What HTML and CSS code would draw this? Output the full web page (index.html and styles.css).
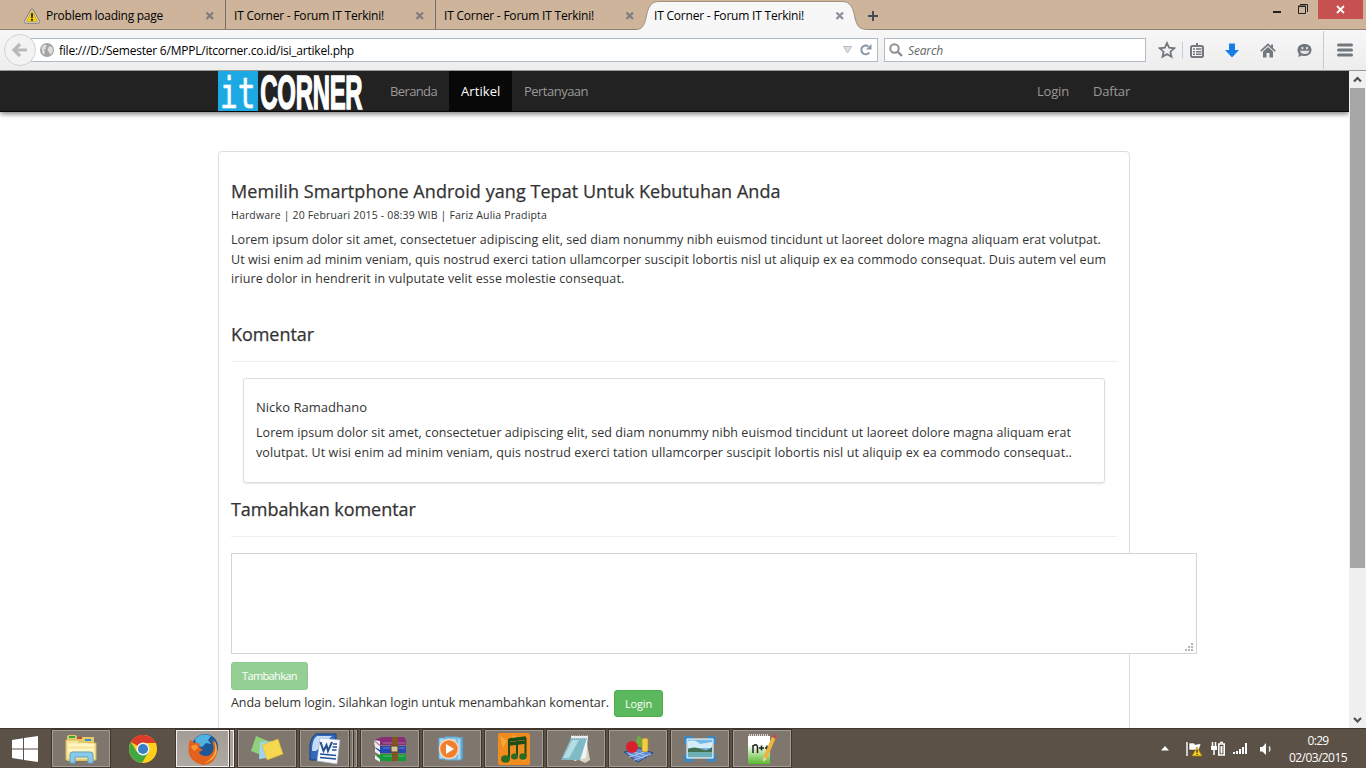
FILE: index.html
```html
<!DOCTYPE html>
<html lang="id">
<head>
<meta charset="utf-8">
<title>IT Corner - Forum IT Terkini!</title>
<link rel="stylesheet" href="styles.css">
</head>
<body>
<div class="screen">
<header class="tabs">
  <div class="tab first">
    <svg class="warn" width="18" height="16" viewBox="0 0 18 16"><path d="M8 1.500Q9 .3 10 1.500l6.600 11.800q.5 1.700-1.200 1.900H2.600Q.9 15 1.400 13.300z" fill="#e8e8e0" stroke="#777" stroke-width="1"/><path d="M9 2.700l5.800 10.800H3.200z" fill="#f3cd12" stroke="#c79b0a" stroke-width=".7"/><path d="M8 5.500h2l-.4 4.700H8.400zM8.100 11.100h1.800v1.700H8.100z" fill="#111"/></svg>
    <span class="t1">Problem loading page</span>
    <svg class="x" width="10" height="10" viewBox="0 0 10 10"><path d="M1.500 1.500l6.500 6.500M8 1.500L1.500 8"/></svg>
  </div>
  <div class="tab"><span class="t2">IT Corner - Forum IT Terkini!</span><svg class="x" width="10" height="10" viewBox="0 0 10 10"><path d="M1.500 1.500l6.500 6.500M8 1.500L1.500 8"/></svg></div>
  <div class="tab last"><span class="t2">IT Corner - Forum IT Terkini!</span><svg class="x" width="10" height="10" viewBox="0 0 10 10"><path d="M1.500 1.500l6.500 6.500M8 1.500L1.500 8"/></svg></div>
  <div class="tab active">
    <svg class="shape" width="236" height="30" viewBox="0 0 236 30"><path d="M0 30V29.500C6 29.500 8 26 10 18C12 8 14 1.500 23 1.500H206C215 1.500 217 8 219 18C221 26 223 29.500 232 29.500V30z" fill="#f7f7f7"/><path d="M0 29.500C6 29.500 8 26 10 18C12 8 14 1.500 23 1.500H206C215 1.500 217 8 219 18C221 26 223 29.500 232 29.500" fill="none" stroke="#a3917e"/></svg>
    <span class="t2">IT Corner - Forum IT Terkini!</span><svg class="x" width="10" height="10" viewBox="0 0 10 10"><path d="M1.500 1.500l6.500 6.500M8 1.500L1.500 8"/></svg>
  </div>
  <svg class="plus" width="12" height="12" viewBox="0 0 12 12"><path d="M6 1v10M1 6h10" stroke="#444d58" stroke-width="2"/></svg>
  <div class="winbtns">
    <svg width="10" height="16" viewBox="0 0 10 16"><path d="M1 11h8v2H1z" fill="#222"/></svg>
    <svg width="12" height="16" viewBox="0 0 12 16"><path d="M1.500 6.500h7v7h-7zM1 6h8M3 4.500h7.500V12" fill="none" stroke="#222"/></svg>
    <div class="close"><svg width="9" height="9" viewBox="0 0 9 9"><path d="M1 1l7 7M8 1L1 8" stroke="#fff" stroke-width="1.800"/></svg></div>
  </div>
</header>

<div class="toolbar">
  <svg class="back" width="32" height="34" viewBox="0 0 32 34"><circle cx="16" cy="17" r="15.500" fill="#f3f3f3" stroke="#d0d3d6"/><path d="M23 17H11.500M16 11l-6 6 6 6" fill="none" stroke="#b7b9bb" stroke-width="3.200"/></svg>
  <div class="url">
    <svg width="14" height="14" viewBox="0 0 14 14"><circle cx="7" cy="7" r="7" fill="#a3a3a3"/><path d="M1.500 5L3 2.500 6 1.500l1 1.500-1.500 1.500L6 6 4 6.500 5 9 4 12 2.500 10zM8 5l1.500-2L12 4l1 3-1 3.500-2 1L9 9 7.500 7.500z" fill="#ddd"/></svg>
    <span class="addr">file:///D:/Semester 6/MPPL/itcorner.co.id/isi_artikel.php</span>
    <svg class="drop" width="9" height="8" viewBox="0 0 9 8"><path d="M.5.5h8L4.500 7z" fill="#dde0e6" stroke="#b4b9c4"/></svg>
    <svg width="12" height="12" viewBox="0 0 12 12"><path d="M9.300 8.500A4.400 4.400 0 1 1 8.500 2.500" fill="none" stroke="#8996a8" stroke-width="2"/><path d="M11.500 0v5.500H6z" fill="#8996a8"/></svg>
  </div>
  <div class="search">
    <svg width="14" height="14" viewBox="0 0 14 14"><circle cx="5.500" cy="5.500" r="4.200" fill="none" stroke="#8f8f8f" stroke-width="2"/><path d="M8.800 8.800l4.200 4.200" stroke="#8f8f8f" stroke-width="2.400"/></svg>
    <span class="sr">Search</span>
  </div>
  <div class="tools">
    <svg width="18" height="18" viewBox="0 0 18 18"><path d="M9 2l2.100 4.700 5.100.6-3.800 3.400 1.100 5L9 13.100l-4.500 2.600 1.100-5L1.800 7.300l5.100-.6z" fill="none" stroke="#73787f" stroke-width="1.800"/></svg>
    <i class="sep1"></i>
    <svg width="14" height="15" viewBox="0 0 14 15"><path d="M4 2h2V0h2v2h2v2H4z" fill="#73787f"/><rect x="1" y="3" width="12" height="11" rx="1.500" fill="#f2f2f2" stroke="#73787f" stroke-width="2"/><path d="M3 6h2M6 6h5.500M3 8.700h2M6 8.700h5.500M3 11.300h2M6 11.300h5.500" stroke="#73787f" stroke-width="1.500"/></svg>
    <svg class="dl" width="14" height="15" viewBox="0 0 14 15"><path d="M4 .5h6v6.500h4L7 14.500 0 7h4z" fill="#177ee5"/></svg>
    <svg class="hm" width="16" height="15" viewBox="0 0 16 15"><path d="M.8 8.200L8 1.500l7.200 6.700" fill="none" stroke="#73787f" stroke-width="1.700"/><path d="M3 8.500l5-4.500 5 4.500V14.500H9.500V10h-3v4.500H3zM11 1.500h2v4l-2-2z" fill="#73787f"/></svg>
    <svg class="sm" width="15" height="15" viewBox="0 0 15 15"><path d="M7.500 1c4.500 0 7 2.600 7 6s-2.800 6-7 6q-1.800 0-3-.5Q3 14 1 13.500q1-1 .8-2.500Q.5 9.500.5 7c0-3.400 2.500-6 7-6z" fill="#73787f"/><path d="M4.500 4h1.800v2.200H4.500zM9 4h1.800v2.200H9zM3 7.800h9.500Q11.500 11 7.700 11T3 7.800z" fill="#e4e4e4"/></svg>
    <i class="sep2"></i>
    <svg class="menu" width="16" height="14" viewBox="0 0 16 14"><path d="M1.500 2h13M1.500 7h13M1.500 12h13" stroke="#73787f" stroke-width="3" stroke-linecap="round"/></svg>
  </div>
</div>

<div class="viewport">
  <div class="page">
    <nav class="navbar">
      <svg class="logo" width="148" height="40" viewBox="0 0 148 40"><rect width="40" height="40" fill="#1ca8e3"/><text transform="translate(2 36.500) scale(.7 1)" class="logo-it">it</text><text transform="translate(42.300 37.500) scale(.498 1)" class="logo-corner">CORNER</text></svg>
      <a class="nl"><span class="n1">Beranda</span></a>
      <a class="nl on"><span class="n2">Artikel</span></a>
      <a class="nl"><span class="n3">Pertanyaan</span></a>
      <a class="nl right"><span class="n4">Login</span></a>
      <a class="nl"><span class="n5">Daftar</span></a>
    </nav>
    <main class="article">
      <h3 class="title"><span class="h1">Memilih Smartphone Android yang Tepat Untuk Kebutuhan Anda</span></h3>
      <div class="meta"><span class="m1">Hardware | 20 Februari 2015 - 08:39 WIB | Fariz Aulia Pradipta</span></div>
      <p class="body"><span class="b1">Lorem ipsum dolor sit amet, consectetuer adipiscing elit, sed diam nonummy nibh euismod tincidunt ut laoreet dolore magna aliquam erat volutpat.</span><br><span class="b2">Ut wisi enim ad minim veniam, quis nostrud exerci tation ullamcorper suscipit lobortis nisl ut aliquip ex ea commodo consequat. Duis autem vel eum</span><br><span class="b3">iriure dolor in hendrerit in vulputate velit esse molestie consequat.</span></p>
      <h3 class="section"><span class="h2">Komentar</span></h3>
      <section class="comment">
        <h5>Nicko Ramadhano</h5>
        <p><span class="b4">Lorem ipsum dolor sit amet, consectetuer adipiscing elit, sed diam nonummy nibh euismod tincidunt ut laoreet dolore magna aliquam erat</span><br><span class="b5">volutpat. Ut wisi enim ad minim veniam, quis nostrud exerci tation ullamcorper suscipit lobortis nisl ut aliquip ex ea commodo consequat..</span></p>
      </section>
      <h3 class="section second"><span class="h3">Tambahkan komentar</span></h3>
      <div class="field"><svg width="9" height="9" viewBox="0 0 9 9"><path d="M6 0h2v2H6zM6 3h2v2H6zM3 3h2v2H3zM6 6h2v2H6zM3 6h2v2H3zM0 6h2v2H0z" fill="#b5b5b5"/></svg></div>
      <button class="btn disabled"><span class="k1">Tambahkan</span></button>
      <div class="login-row"><span class="b6">Anda belum login. Silahkan login untuk menambahkan komentar.</span><button class="btn"><span class="k2">Login</span></button></div>
    </main>
  </div>
  <div class="scroll">
    <svg width="17" height="17" viewBox="0 0 17 17"><path d="M5 10.500L8.500 7l3.500 3.500" fill="none" stroke="#505050" stroke-width="2.200"/></svg>
    <div class="thumb"></div>
    <svg class="down" width="17" height="17" viewBox="0 0 17 17"><path d="M5 7l3.500 3.500L12 7" fill="none" stroke="#505050" stroke-width="2.200"/></svg>
  </div>
</div>

<footer class="taskbar">
  <div class="start"><svg width="28" height="26" viewBox="0 0 28 26"><path d="M1 4l11-1.700V12.500H1zM13 2.100L27 0v12.500H13zM1 13.500h11v10.200L1 22zM13 13.500h14V26l-14-2.100z" fill="#fff"/></svg></div>
  <div class="app"><svg width="34" height="32" viewBox="0 0 34 32"><path d="M3 4l1-2h8l1 2h17v24H3z" fill="#e7c967"/><path d="M5 3h6v2H5z" fill="#2cae3c"/><path d="M13 4h5v2h-5z" fill="#c9452d"/><path d="M21 6h6v2h-6z" fill="#368cd0"/><path d="M2 7h12l1 2h8l1 1h8v17H2z" fill="#f7e59c" stroke="#d8b856"/><path d="M4 12h26M4 17h26" stroke="#fff4c4" stroke-width="3"/><path d="M6 30V22q0-3 3-3h17q3 0 3 3v8h-5v-6H11v6z" fill="#8bcbe9" stroke="#5ba4ca"/></svg></div>
  <div class="app plain"><svg width="30" height="30" viewBox="0 0 30 30"><circle cx="15" cy="15" r="14" fill="#ffcf1c"/><path d="M15 15L2.900 8A14 14 0 0 1 27.800 9H15z" fill="#dd3c2d"/><path d="M2.900 8A14 14 0 0 0 14 29l6.500-11H15L9 18z" fill="#43a744"/><circle cx="15" cy="15" r="6.500" fill="#f5f5f5"/><circle cx="15" cy="15" r="5" fill="#397fc9"/></svg></div>
  <div class="app lit one"><svg width="32" height="32" viewBox="0 0 32 32"><circle cx="18" cy="14" r="13" fill="#1c5797"/><path d="M8 6Q15-1 24 3l-3 4 3 4-5-1-4 4-6-2z" fill="#4fb3e2"/><path d="M3 7q2 0 4 3 3-1 6 1l-1 3 4 3-4 2q1 4 7 4 5 0 7-5 2-6-2-11 7 5 6 12-2 13-14 13Q3 29 1.500 19 1.300 12 3 7z" fill="#e3611d"/><path d="M26 6q6 7 3 15-4 8-12 9 9-4 11-12 1-6-2-12z" fill="#f7b132"/><path d="M4 14q2-3 6-2l1 3-4 3z" fill="#f59635"/></svg></div><i class="sheet bright"></i>
  <div class="app gap3"><svg width="34" height="30" viewBox="0 0 34 30"><path d="M6 2l12 5-4 15-13-5z" fill="#8fd07a"/><path d="M10 8l13-1 2 16-16 2z" fill="#9ed5f4"/><path d="M12 11l16-6 5 15-16 6z" fill="#f5d850" stroke="#d7b739" stroke-width=".6"/></svg></div>
  <div class="app word"><svg width="34" height="32" viewBox="0 0 34 32"><path d="M8 1h20v26H2V13Q3 4 8 1z" fill="#3469b8" stroke="#173d80"/><path d="M9 3h15L8 18H4q0-12 5-15z" fill="#c3dbf6"/><path d="M12 5l20 2-3 24-20-3z" fill="#f6f9ff" stroke="#a3adbd" stroke-width=".6"/><path d="M12.500 9l3 9 3-6 1.500 6 4-9" fill="none" stroke="#24508f" stroke-width="2"/><path d="M25 11h4M24.500 14h4.500M24 17h4.500M12 21l16 1.500M12 24.500l16 1.500" stroke="#24508f" stroke-width="1.600"/></svg></div><i class="sheet"></i><i class="sheet"></i>
  <div class="app gap4"><svg width="34" height="28" viewBox="0 0 34 28"><path d="M1 5l8-3h22l2 3v5H6z" fill="#8b2c78"/><path d="M1 5l6 5v-4z" fill="#f3e9e3"/><path d="M6 11h27v7H7L2 14z" fill="#2548b4"/><path d="M7 19h26v7H7L2 22z" fill="#169939"/><path d="M10 8h22M10 13h22M10 21h22" stroke="#fff" stroke-opacity=".3"/><path d="M1 6l6 5v4l-5-3zM2 13l5 4v3l-5-3zM2 20l5 4v3l-5-3z" fill="#eee"/><path d="M19 2h6v24h-6z" fill="#815424"/><path d="M18 11h7v6h-7z" fill="#d9c49b" stroke="#584020"/></svg></div>
  <div class="app"><svg width="30" height="26" viewBox="0 0 30 26"><path d="M12 1h14v22H12z" fill="#54a3d2"/><path d="M8 1h12l4 2v21H8zM2 2h18v21H2z" fill="#a7d8f1" stroke="#5fa9d4"/><circle cx="12" cy="13" r="9.500" fill="#f08030" stroke="#f7d5b8" stroke-width="1.500"/><path d="M9 8l8 5-8 5z" fill="#fff"/></svg></div>
  <div class="app"><svg width="32" height="32" viewBox="0 0 32 32"><rect width="32" height="32" rx="2" fill="#f08b1d"/><path d="M2 3l7 5-4 7zM20 22l9-3-2 10zM14 2l5 2-4 4z" fill="#f6a83a"/><path d="M11 7l17-2M11 11l17-2" fill="none" stroke="#1d4d1b" stroke-width="3.500"/><path d="M11 6v19M19 8v15M27.500 5v18" stroke="#1d4d1b" stroke-width="2"/><ellipse cx="7.500" cy="26" rx="4.500" ry="3.700" fill="#2c6a22"/><ellipse cx="25" cy="23.500" rx="3.700" ry="3.200" fill="#2c6a22"/><ellipse cx="16.500" cy="23.500" rx="3.500" ry="3" fill="#2c6a22"/></svg></div>
  <div class="app"><svg width="32" height="30" viewBox="0 0 32 30"><path d="M26 4l4 22-5 3-6-3z" fill="#d9d3bf"/><path d="M11 2h17l-2 22-12 3z" fill="#f0f4f4"/><path d="M11 4h16l-7 22H1z" fill="#7fbac6"/><path d="M12 6h7L9 24H3z" fill="#b5dce3"/><path d="M11 3h17" stroke="#e8e8e8" stroke-width="3" stroke-dasharray="1 1"/></svg></div>
  <div class="app"><svg width="32" height="30" viewBox="0 0 32 30"><path d="M2 18l15-4 14 5-15 9z" fill="#628bd2" stroke="#26498b"/><path d="M6 20l16 4M11 18l15 4M7 23l18-6M12 26l17-6" stroke="#a9c8ef"/><path d="M14 13q-1-7 3-12 5 6 3 12z" fill="#6dad44"/><circle cx="10" cy="13" r="6" fill="#d7222d"/><path d="M20 5q3-2 6 0v12q-3 2-6 0z" fill="#f1cc48" stroke="#b78d20" stroke-width=".7"/></svg></div>
  <div class="app"><svg width="32" height="26" viewBox="0 0 32 26"><path d="M2 8V2h7M23 2h7v6M30 18v6h-7M9 24H2v-6" fill="none" stroke="#348bca" stroke-width="3.500"/><path d="M3 3h26v19H3z" fill="#75b8e6" stroke="#fff"/><path d="M4 5q8-2 12 3l12-2v6H4z" fill="#d5edf8"/><path d="M4 13q6-3 13 0t11-2v5H4z" fill="#436f52"/><path d="M4 16h24v5H4z" fill="#6eafb3"/></svg></div>
  <div class="app"><svg width="32" height="32" viewBox="0 0 32 32"><defs><linearGradient id="np" x2="0" y2="1"><stop offset=".3" stop-color="#fff"/><stop offset="1" stop-color="#58b82b"/></linearGradient></defs><path d="M2 3h22v28H2z" fill="url(#np)"/><path d="M3 2h20" stroke="#ddd" stroke-width="2" stroke-dasharray="1 1"/><path d="M7 20V12M7 13q4-3 4.500 1v6M13 15h5M15.500 12.500v5M19 15h4M21 12.500v5" fill="none" stroke="#222" stroke-width="1.500"/><path d="M28 4L19 25" stroke="#f0b33c" stroke-width="4"/><path d="M27 1l4 2-1 3-4-2z" fill="#bd4f51"/><path d="M17 24l4 2-4 3z" fill="#e9cfab"/></svg></div>
  <div class="tray">
    <svg width="8" height="5" viewBox="0 0 8 5"><path d="M0 4.500L4 0l4 4.500z" fill="#fff"/></svg>
    <svg class="flag" width="17" height="16" viewBox="0 0 17 16"><path d="M1 1v14" stroke="#fff" stroke-width="1.400"/><path d="M3 2h5l1 1.500 6-1L13 9H3z" fill="#fff" stroke="#333" stroke-width=".5"/><path d="M11 6l5 9H6z" fill="#f4cf20" stroke="#a87b00" stroke-width=".6"/><path d="M11 8.800v3M11 13v1" stroke="#222" stroke-width="1.200"/></svg>
    <svg class="bat" width="16" height="16" viewBox="0 0 16 16"><path d="M2.500 1v4M5.500 1v4M4 9v5" fill="none" stroke="#fff" stroke-width="1.500"/><path d="M1 5h6v4H1z" fill="#fff"/><path d="M8.800 3h5.400v11H8.800z" fill="#4a4138" stroke="#fff" stroke-width="1.600"/><path d="M10.500 5h2v7.500h-2z" fill="#fff"/><path d="M10 1.500h3" stroke="#fff" stroke-width="1.500"/></svg>
    <svg class="sig" width="16" height="13" viewBox="0 0 16 13"><path d="M0 10h2v2H0zM3 9h2v3H3zM6 7h2v5H6zM9 5h2v7H9zM12 1h2v11h-2z" fill="#fff"/></svg>
    <svg class="spk" width="14" height="14" viewBox="0 0 14 14"><path d="M1 5h2.500L7 1v12L3.500 9.500H1z" fill="#fff"/><path d="M10 4.500q2 2.500 0 5" fill="none" stroke="#e8e5e2" stroke-width="1.300"/></svg>
    <div class="clock"><div class="q1">0:29</div><div class="q2">02/03/2015</div></div>
  </div>
</footer>
</div>
</body>
</html>
```
FILE: styles.css
```css
*{box-sizing:border-box}
body{margin:0;overflow:hidden;background:#fff;font:12px "Open Sans","Noto Sans",sans-serif;color:#333}
h3,h5,p{margin:0;font-weight:400}
svg{display:block;flex:none}
span{white-space:nowrap}
.screen{width:1366px;height:768px;display:flex;flex-direction:column;overflow:hidden}

/* browser chrome */
.tabs{height:30px;background:#cdb49b;border-bottom:1px solid #8d8175;display:flex;flex:none;color:#000;padding-left:16px;position:relative;z-index:1}
.tab{width:210px;height:29px;padding:2px 10px 0 8px;display:flex;align-items:center;border-right:1px solid #766d66;flex:none}
.tab.first{padding-left:7px}
.tab.last{border-right:0;padding-right:11px}
.tab.active{height:30px;border:0;position:relative;width:210px;padding:1px 11px 0 8px}
.warn{margin-right:5px}
.tab span{position:relative}
.t1{letter-spacing:-.262px}
.t2{letter-spacing:-.206px}
.x{margin-left:auto;position:relative}
.x path{stroke:#7e7e80;stroke-width:2.300;fill:none}
.tab.active .x path{stroke:#8b929b}
.shape{position:absolute;left:-10px;top:0}
.plus{margin:10px 0 0 11px}
.winbtns{display:flex;margin-left:auto;gap:15px;padding-right:3px}
.close{width:45px;height:19px;background:#c75050;display:flex;align-items:center;justify-content:center;margin-left:-6px}
.toolbar{height:41px;flex:none;background:linear-gradient(#f7f7f7,#ededed);border-bottom:1px solid #979b95;display:flex;align-items:flex-start;padding-left:4px}
.back{margin-top:3px;position:relative;z-index:1}
.url{margin:8px 0 0 -5px;width:847px;height:24px;border:1px solid #b1bbc6;background:#fff;display:flex;align-items:center;padding:0 5px 0 8px;color:#000}
.addr{margin-left:5px;letter-spacing:-.227px}
.drop{margin:0 8px 0 auto}
.search{margin:8px 0 0 6px;width:262px;height:24px;border:1px solid #b1bbc6;background:#fff;display:flex;align-items:center;padding-left:4px;font-style:italic;color:#666}
.sr{margin-left:5px;letter-spacing:-.151px}
.tools{display:flex;align-items:center;height:40px;margin-left:12px}
.sep1{width:1px;height:16px;background:#c5ccd3;margin:0 7px 0 6px}
.dl,.hm,.sm{margin-left:21px}
.sep2{width:1px;height:38px;background:#c8cbd0;margin:0 13px 0 11px}

/* page */
.viewport{flex:1;display:flex;min-height:0}
.page{width:1349px;overflow:hidden;background:#fff}
.navbar{height:41px;background:#222;border-bottom:1px solid #080808;box-shadow:0 2px 5px rgba(0,0,0,.5);display:flex;padding:0 207px 0 218px}
.logo{margin:0 12px 0 0;overflow:visible}
.logo-it{font:200 42px "DejaVu Sans Mono",monospace;fill:#fff;stroke:#fff;stroke-width:.6}
.logo-corner{font:700 48px "Liberation Sans",sans-serif;letter-spacing:-.5px;fill:#fff;stroke:#fff;stroke-width:1.6}
.nl{color:#999;font-size:13px;line-height:40px;padding:0 12px;height:40px}
.nl.on{background:#080808;color:#fff;width:63px}
.n1{letter-spacing:-.627px}
.n2{letter-spacing:.089px}
.n3{letter-spacing:-.52px}
.n4{letter-spacing:-.184px}
.n5{letter-spacing:-.201px}
.right{margin-left:auto}
.article{margin:39px 0 0 218px;width:912px;height:640px;border:1px solid #ddd;border-radius:4px;padding:26px 12px 0}
.title,.section{font-size:18px;line-height:26px;-webkit-text-stroke:.25px #333}
.meta{font-size:10.500px;line-height:16px;margin-top:3px;letter-spacing:.167px}
.body{font-size:12.500px;line-height:19.500px;margin-top:7px}
.h1{letter-spacing:.055px}
.h2{letter-spacing:-.055px}
.h3{letter-spacing:-.05px}
.b1{letter-spacing:.048px}
.b2{letter-spacing:.071px}
.b3{letter-spacing:.09px}
.b4{letter-spacing:.049px}
.b5{letter-spacing:.091px}
.b6{letter-spacing:-.052px}
.section{margin-top:32px;height:41px;border-bottom:1px solid #eee}
.comment{margin:16px 12px 0;height:105px;border:1px solid #ddd;border-radius:3px;box-shadow:0 1px 2px rgba(0,0,0,.1);padding:18px 12px}
.comment h5{font-size:13px;line-height:20px;letter-spacing:.015px}
.comment p{font-size:12.500px;line-height:20px;margin-top:6px}
.section.second{margin-top:13px}
.field{width:966px;height:101px;margin-top:16px;border:1px solid #d5d5d5;background:#fff;display:flex;align-items:flex-end;justify-content:flex-end;padding:1px 2px;position:relative}
.btn{display:block;height:27px;padding:0 10px;border:1px solid #4cae4c;border-radius:3px;background:#5cb85c;color:#fff;font:11px "Open Sans",sans-serif;flex:none;width:49px}
.disabled{margin-top:8px;height:28px;opacity:.65;width:77px}
.k1{letter-spacing:-.622px}
.k2{letter-spacing:-.172px}
.login-row{display:flex;gap:5px;font-size:12.500px;line-height:25px}
.scroll{width:17px;background:#f0f0f0;display:flex;flex-direction:column}
.thumb{width:15px;height:480px;background:#a6a6a6;margin-left:1px}
.down{margin-top:auto}

/* taskbar */
.taskbar{height:40px;flex:none;background:#5c5146;border-top:1px solid #40372f;display:flex;align-items:flex-start}
.start{width:51px;height:39px;display:flex;align-items:center;padding-left:11px;flex:none}
.app{width:60px;height:39px;margin-right:2px;border:1px solid #3f372f;box-shadow:inset 0 0 0 1px #a49d96;background:#7f766e;display:flex;align-items:center;justify-content:center;flex:none}
.plain{background:none;border:0;box-shadow:none}
.lit{background:linear-gradient(#a39c95,#b0aaa4);box-shadow:inset 0 0 0 1px #f2f0ee}
.one{width:55px;margin:0}
.word{width:51px;margin:0}
.sheet{width:4px;height:39px;border:solid #3f372f;border-width:1px 1px 1px 0;background:#7f766e;box-shadow:inset -1px 0 #a49d96,inset 0 1px #a49d96,inset 0 -1px #a49d96;flex:none}
.sheet.bright{width:5px;background:#aaa49e;box-shadow:inset -1px 0 #f2f0ee,inset 0 1px #f2f0ee,inset 0 -1px #f2f0ee}
.gap3{margin-left:2px}
.gap4{margin-left:2px}
.tray{margin-left:auto;display:flex;height:39px;align-items:center;padding-right:18px;color:#fff}
.flag{margin-left:17px}
.bat{margin-left:7px}
.sig{margin-left:7px}
.spk{margin-left:10px}
.clock{width:60px;margin-left:15px;text-align:center;line-height:17px;padding-top:1px}
.q1{letter-spacing:-.688px}
.q2{letter-spacing:-.57px}
```
